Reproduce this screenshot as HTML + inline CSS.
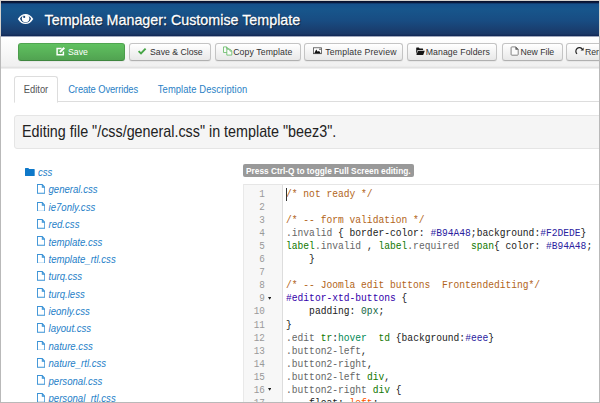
<!DOCTYPE html>
<html><head><meta charset="utf-8"><title>Template Manager: Customise Template</title>
<style>
*{box-sizing:border-box;margin:0;padding:0}
html,body{width:600px;height:403px;overflow:hidden;background:#fff}
body{font-family:"Liberation Sans",sans-serif;font-size:10px;color:#333;position:relative}
#frame{position:absolute;left:0;top:0;width:600px;height:403px;border:1px solid #b9b9b9;border-top-color:#d6d3ce;z-index:50;pointer-events:none}
#frame2{position:absolute;left:0;top:0;width:600px;height:36px;border-left:1px solid #d6d3ce;border-right:1px solid #d6d3ce;z-index:51;pointer-events:none}
#wrap{position:absolute;left:1px;top:1px;width:598px;height:401px;overflow:hidden;background:#fff}
#hdr{z-index:3;position:absolute;left:0;top:0;width:598px;height:36px;background:linear-gradient(#050f2b 0,#0a1838 1.2px,#0d2046 2px,#15508a 2.8px,#17568c 8px,#184c82 55%,#1a3867 33px,#132c58 34.3px,#10255a 35px,rgba(16,37,90,.4) 35px,rgba(16,37,90,.4) 36px)}
#hdr h1{position:absolute;left:43.6px;top:10.8px;transform:scaleY(1.05);transform-origin:50% 50%;-webkit-text-stroke:.25px #fff;font-size:14.3px;line-height:17px;font-weight:normal;color:#fff;white-space:nowrap;text-shadow:1px 1px 1px rgba(0,0,0,.6)}
#tb{position:absolute;left:0;top:35px;width:598px;height:33px;background:linear-gradient(#fff 0,#fefefe 4px,#f0f0f0 30px,#ebebeb 30px,#ebebeb 31px,#e2e2e2 31px,#e2e2e2 32px,#eee 32px,#eee 33px)}
.btn{position:absolute;top:7px;height:18px;border:1px solid #c4c4c4;border-bottom-color:#b0b0b0;border-radius:3px;background:linear-gradient(#fff,#e8e8e8);font-size:8.7px;line-height:16px;color:#333;white-space:nowrap;box-shadow:0 1px 1px rgba(0,0,0,.05)}
.btn span{position:absolute;top:0;transform:scaleY(1.1)}
.btn svg{position:absolute}
.btn.g{background:linear-gradient(#60c160,#51a351);border-color:#50a550 #4c9d4c #3f863f;color:#fff}
#tabs{position:absolute;left:13px;top:75px;width:585px;height:26px;border-bottom:1px solid #ddd}
.tab{position:absolute;top:0;height:26px;line-height:27.5px;font-size:9.4px;color:#2a7fc5;white-space:nowrap}
.tab.a{border:1px solid #ddd;border-bottom-color:#fff;border-radius:3px 3px 0 0;color:#555;background:#fff;height:27px;line-height:26.5px}
#well{position:absolute;left:13px;top:114px;width:590px;height:34px;background:#f5f5f5;border:1px solid #e5e5e5;border-radius:3px}
#well span{position:absolute;left:7px;top:8.4px;transform:scaleY(1.1);font-size:14.33px;line-height:17px;color:#222;white-space:nowrap}
.tr{position:absolute;transform:scaleY(1.1);font-size:9.6px;line-height:12px;font-style:italic;color:#2580c8;white-space:nowrap}
.ic{position:absolute}
#ed{position:absolute;left:242px;top:183px;width:400px;height:230px;border:1px solid #e6e6e6;border-left-color:#e9e9e9;background:#fff}
#gut{position:absolute;left:0;top:0;width:39px;height:230px;background:#f7f7f7;border-right:1px solid #ddd}
#cur{position:absolute;left:41.6px;top:3.2px;width:1.2px;height:12.4px;background:#333}
.ln{position:absolute;transform:scaleY(1.18);left:0;width:20.6px;letter-spacing:-.2px;font-family:"Liberation Mono",monospace;font-size:9.3px;line-height:11px;color:#999;text-align:right}
.fd{position:absolute;left:23.9px}
.cl{position:absolute;transform:scaleY(1.1);left:42px;font-family:"Liberation Mono",monospace;font-size:9.63px;line-height:12px;white-space:pre;color:#222}
#tip{position:absolute;left:242px;top:163px;height:13px;padding:0 3px;background:#999;color:#fff;font-weight:bold;font-size:8.3px;line-height:14px;border-radius:2px;white-space:nowrap}
.c{color:#b2651a}.q{color:#666}.a{color:#2a22a0}.t{color:#170}.b{color:#30a}.n{color:#164}.v{color:#085}.e{color:#f50}
.tab span{display:inline-block;transform:scaleY(1.1)}
#tip span{display:inline-block;transform:scaleY(1.1)}
#ico{position:absolute;left:-1px;top:-1px;z-index:5}
</style></head><body>
<div id="wrap">
<div id="hdr"><h1>Template Manager: Customise Template</h1></div>
<div id="tb">
 <div class="btn g" style="left:17px;width:107px"><span style="left:49px">Save</span></div>
 <div class="btn" style="left:128px;width:82px"><span style="left:20px">Save &amp; Close</span></div>
 <div class="btn" style="left:214px;width:86px"><span style="left:17.2px;letter-spacing:.12px">Copy Template</span></div>
 <div class="btn" style="left:303px;width:99px"><span style="left:20.3px;letter-spacing:.17px">Template Preview</span></div>
 <div class="btn" style="left:406px;width:90px"><span style="left:17.7px;letter-spacing:.11px">Manage Folders</span></div>
 <div class="btn" style="left:501px;width:61px"><span style="left:17.4px">New File</span></div>
 <div class="btn" style="left:565px;width:60px"><span style="left:18px">Rename</span></div>
</div>
<div id="tabs">
 <div class="tab a" style="left:0;width:44px;text-align:center"><span>Editor</span></div>
 <div class="tab" style="left:54.2px;letter-spacing:-.1px"><span>Create Overrides</span></div>
 <div class="tab" style="left:143.8px;letter-spacing:.1px"><span>Template Description</span></div>
</div>
<div id="well"><span>Editing file "/css/general.css" in template "beez3".</span></div>

<svg id="ico" width="600" height="70" viewBox="0 0 600 70">
 <!-- eye -->
 <g>
  <clipPath id="ey"><path d="M19.6 18.9 C21.4 16.2 23.4 15.2 25.5 15.2 C27.7 15.2 29.7 16.2 31.5 18.9 C29.7 21.6 27.7 22.7 25.5 22.7 C23.4 22.7 21.4 21.6 19.6 18.9 Z"/></clipPath>
  <path d="M17.8 18.9 C20 15.4 22.6 13.9 25.5 13.9 C28.5 13.9 31.1 15.4 33.3 18.9 C31.1 22.5 28.5 24 25.5 24 C22.6 24 20 22.5 17.8 18.9 Z" fill="#fff"/>
  <circle cx="25.5" cy="18.2" r="5.4" fill="#1a4679" clip-path="url(#ey)"/>
  <circle cx="25.6" cy="18.6" r="3.75" fill="#fff"/>
  <circle cx="24.2" cy="16.9" r="1.05" fill="#1a4679"/>
 </g>
 <!-- save/edit -->
 <g fill="none" stroke="#fff">
  <path d="M61.6 48.4 H57.1 V54.8 H63.4 V51.4" stroke-width="1.45"/>
  <path d="M59.9 52.1 L64.3 47.8" stroke-width="2"/>
 </g>
 <!-- check -->
 <path d="M138.6 51.1 L141 53.4 L145.6 48.6" fill="none" stroke="#46a546" stroke-width="1.9"/>
 <!-- copy -->
 <g fill="#fbfbfb" stroke="#62b962" stroke-width=".8">
  <path d="M223.5 46.9 H226.6 L228.3 48.6 V52.5 H223.5 Z M226.5 46.9 V48.7 H228.3"/>
  <path d="M226.8 49.2 H230 L231.8 51 V55.1 H226.8 Z M229.9 49.2 V51.1 H231.8"/>
 </g>
 <!-- picture -->
 <g>
  <rect x="313.5" y="47.8" width="8" height="5.9" fill="#fff" stroke="#444" stroke-width=".75"/>
  <path d="M314.2 53.4 L316.2 49.4 L317.8 51.8 L319 50.8 L320.8 53.4 Z" fill="#111"/>
  <circle cx="320" cy="49.3" r=".7" fill="#222"/>
 </g>
 <!-- folder open -->
 <g fill="#151515">
  <path d="M416.2 54.5 V48.1 Q416.2 47.6 416.7 47.6 H418.8 L419.6 48.5 H422.6 Q423.1 48.5 423.1 49 V50 H417.6 L416.2 54.5 Z"/>
  <path d="M418 50.7 H424.8 L423.2 54.9 H416.4 Z"/>
 </g>
 <!-- new file -->
 <g fill="#fbfbfb" stroke="#777" stroke-width=".9">
  <path d="M511.9 46.9 H515.7 L518.2 49.4 V54.4 Q518.2 55.2 517.4 55.2 H511.9 Q511.1 55.2 511.1 54.4 V47.7 Q511.1 46.9 511.9 46.9 Z"/>
  <path d="M515.7 46.9 L518.2 49.4 H515.7 Z" fill="#666" stroke="#555" stroke-width=".5"/>
 </g>
 <!-- refresh -->
 <g>
  <path d="M577 53.9 A3.5 3.6 0 1 1 582.3 49.3" fill="none" stroke="#222" stroke-width="1.2"/>
  <path d="M583.6 47.6 V50.6 H580.6 Z" fill="#222"/>
 </g>
</svg>

<div class="tr" style="left:37px;top:166.30px">css</div>
<svg class="ic" style="left:24.2px;top:167.00px" width="9.7" height="8" preserveAspectRatio="none" viewBox="0 0 10 8"><path d="M0 0.6 Q0 0 .6 0 H3.4 L4.4 1 H9.4 Q10 1 10 1.6 V7.4 Q10 8 9.4 8 H.6 Q0 8 0 7.4 Z" fill="#0e78c9"/></svg>
<svg class="ic" style="left:35.8px;top:183.18px" width="8.2" height="9.8" viewBox="0 0 9 10" preserveAspectRatio="none"><path d="M.5 .5 H5.8 L8.5 3.2 V9.5 H.5 Z M5.8 .5 V3.2 H8.5" fill="#fff" stroke="#3a92d6" stroke-width="1.05"/></svg>
<div class="tr" style="left:47.5px;top:183.38px">general.css</div>
<svg class="ic" style="left:35.8px;top:200.56px" width="8.2" height="9.8" viewBox="0 0 9 10" preserveAspectRatio="none"><path d="M.5 .5 H5.8 L8.5 3.2 V9.5 H.5 Z M5.8 .5 V3.2 H8.5" fill="#fff" stroke="#3a92d6" stroke-width="1.05"/></svg>
<div class="tr" style="left:47.5px;top:200.76px">ie7only.css</div>
<svg class="ic" style="left:35.8px;top:217.94px" width="8.2" height="9.8" viewBox="0 0 9 10" preserveAspectRatio="none"><path d="M.5 .5 H5.8 L8.5 3.2 V9.5 H.5 Z M5.8 .5 V3.2 H8.5" fill="#fff" stroke="#3a92d6" stroke-width="1.05"/></svg>
<div class="tr" style="left:47.5px;top:218.14px">red.css</div>
<svg class="ic" style="left:35.8px;top:235.32px" width="8.2" height="9.8" viewBox="0 0 9 10" preserveAspectRatio="none"><path d="M.5 .5 H5.8 L8.5 3.2 V9.5 H.5 Z M5.8 .5 V3.2 H8.5" fill="#fff" stroke="#3a92d6" stroke-width="1.05"/></svg>
<div class="tr" style="left:47.5px;top:235.52px">template.css</div>
<svg class="ic" style="left:35.8px;top:252.70px" width="8.2" height="9.8" viewBox="0 0 9 10" preserveAspectRatio="none"><path d="M.5 .5 H5.8 L8.5 3.2 V9.5 H.5 Z M5.8 .5 V3.2 H8.5" fill="#fff" stroke="#3a92d6" stroke-width="1.05"/></svg>
<div class="tr" style="left:47.5px;top:252.90px">template_rtl.css</div>
<svg class="ic" style="left:35.8px;top:270.08px" width="8.2" height="9.8" viewBox="0 0 9 10" preserveAspectRatio="none"><path d="M.5 .5 H5.8 L8.5 3.2 V9.5 H.5 Z M5.8 .5 V3.2 H8.5" fill="#fff" stroke="#3a92d6" stroke-width="1.05"/></svg>
<div class="tr" style="left:47.5px;top:270.28px">turq.css</div>
<svg class="ic" style="left:35.8px;top:287.46px" width="8.2" height="9.8" viewBox="0 0 9 10" preserveAspectRatio="none"><path d="M.5 .5 H5.8 L8.5 3.2 V9.5 H.5 Z M5.8 .5 V3.2 H8.5" fill="#fff" stroke="#3a92d6" stroke-width="1.05"/></svg>
<div class="tr" style="left:47.5px;top:287.66px">turq.less</div>
<svg class="ic" style="left:35.8px;top:304.84px" width="8.2" height="9.8" viewBox="0 0 9 10" preserveAspectRatio="none"><path d="M.5 .5 H5.8 L8.5 3.2 V9.5 H.5 Z M5.8 .5 V3.2 H8.5" fill="#fff" stroke="#3a92d6" stroke-width="1.05"/></svg>
<div class="tr" style="left:47.5px;top:305.04px">ieonly.css</div>
<svg class="ic" style="left:35.8px;top:322.22px" width="8.2" height="9.8" viewBox="0 0 9 10" preserveAspectRatio="none"><path d="M.5 .5 H5.8 L8.5 3.2 V9.5 H.5 Z M5.8 .5 V3.2 H8.5" fill="#fff" stroke="#3a92d6" stroke-width="1.05"/></svg>
<div class="tr" style="left:47.5px;top:322.42px">layout.css</div>
<svg class="ic" style="left:35.8px;top:339.60px" width="8.2" height="9.8" viewBox="0 0 9 10" preserveAspectRatio="none"><path d="M.5 .5 H5.8 L8.5 3.2 V9.5 H.5 Z M5.8 .5 V3.2 H8.5" fill="#fff" stroke="#3a92d6" stroke-width="1.05"/></svg>
<div class="tr" style="left:47.5px;top:339.80px">nature.css</div>
<svg class="ic" style="left:35.8px;top:356.98px" width="8.2" height="9.8" viewBox="0 0 9 10" preserveAspectRatio="none"><path d="M.5 .5 H5.8 L8.5 3.2 V9.5 H.5 Z M5.8 .5 V3.2 H8.5" fill="#fff" stroke="#3a92d6" stroke-width="1.05"/></svg>
<div class="tr" style="left:47.5px;top:357.18px">nature_rtl.css</div>
<svg class="ic" style="left:35.8px;top:374.36px" width="8.2" height="9.8" viewBox="0 0 9 10" preserveAspectRatio="none"><path d="M.5 .5 H5.8 L8.5 3.2 V9.5 H.5 Z M5.8 .5 V3.2 H8.5" fill="#fff" stroke="#3a92d6" stroke-width="1.05"/></svg>
<div class="tr" style="left:47.5px;top:374.56px">personal.css</div>
<svg class="ic" style="left:35.8px;top:391.74px" width="8.2" height="9.8" viewBox="0 0 9 10" preserveAspectRatio="none"><path d="M.5 .5 H5.8 L8.5 3.2 V9.5 H.5 Z M5.8 .5 V3.2 H8.5" fill="#fff" stroke="#3a92d6" stroke-width="1.05"/></svg>
<div class="tr" style="left:47.5px;top:391.94px">personal_rtl.css</div>
<div id="tip"><span>Press Ctrl-Q to toggle Full Screen editing.</span></div>
<div id="ed"><div id="gut"></div><div id="cur"></div>
<div class="ln" style="top:4.20px">1</div>
<div class="cl" style="top:4.20px"><span class="c">/* not ready */</span></div>
<div class="ln" style="top:17.23px">2</div>
<div class="ln" style="top:30.26px">3</div>
<div class="cl" style="top:30.26px"><span class="c">/* -- form validation */</span></div>
<div class="ln" style="top:43.29px">4</div>
<div class="cl" style="top:43.29px"><span class="q">.invalid</span> { border-color: <span class="a">#B94A48</span>;background:<span class="a">#F2DEDE</span>}</div>
<div class="ln" style="top:56.32px">5</div>
<div class="cl" style="top:56.32px"><span class="t">label</span><span class="q">.invalid</span> , <span class="t">label</span><span class="q">.required</span>  <span class="t">span</span>{ color: <span class="a">#B94A48</span>;</div>
<div class="ln" style="top:69.35px">6</div>
<div class="cl" style="top:69.35px">    }</div>
<div class="ln" style="top:82.38px">7</div>
<div class="ln" style="top:95.41px">8</div>
<div class="cl" style="top:95.41px"><span class="c">/* -- Joomla edit buttons  Frontendediting*/</span></div>
<div class="ln" style="top:108.44px">9</div>
<svg class="fd" style="top:112.14px" width="3.4" height="2.7" viewBox="0 0 3.4 2.7"><path d="M0 0 H3.4 L1.7 2.7 Z" fill="#1c1c1c"/></svg>
<div class="cl" style="top:108.44px"><span class="b">#editor-xtd-buttons</span> {</div>
<div class="ln" style="top:121.47px">10</div>
<div class="cl" style="top:121.47px">    padding: <span class="n">0px</span>;</div>
<div class="ln" style="top:134.50px">11</div>
<div class="cl" style="top:134.50px">}</div>
<div class="ln" style="top:147.53px">12</div>
<div class="cl" style="top:147.53px"><span class="q">.edit</span> <span class="t">tr</span>:<span class="v">hover</span>  <span class="t">td</span> {background:<span class="a">#eee</span>}</div>
<div class="ln" style="top:160.56px">13</div>
<div class="cl" style="top:160.56px"><span class="q">.button2-left</span>,</div>
<div class="ln" style="top:173.59px">14</div>
<div class="cl" style="top:173.59px"><span class="q">.button2-right</span>,</div>
<div class="ln" style="top:186.62px">15</div>
<div class="cl" style="top:186.62px"><span class="q">.button2-left</span> <span class="t">div</span>,</div>
<div class="ln" style="top:199.65px">16</div>
<svg class="fd" style="top:203.35px" width="3.4" height="2.7" viewBox="0 0 3.4 2.7"><path d="M0 0 H3.4 L1.7 2.7 Z" fill="#1c1c1c"/></svg>
<div class="cl" style="top:199.65px"><span class="q">.button2-right</span> <span class="t">div</span> {</div>
<div class="ln" style="top:212.68px">17</div>
<div class="cl" style="top:212.68px">    float: <span class="e">left</span>;</div>
</div>
</div>
<div id="frame"></div><div id="frame2"></div>
</body></html>
